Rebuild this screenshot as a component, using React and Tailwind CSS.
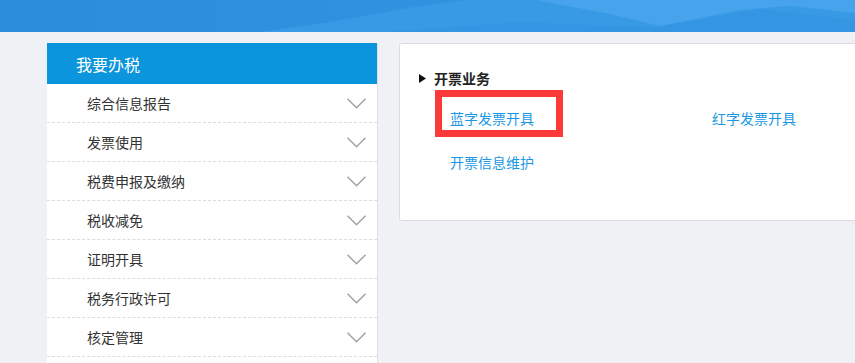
import React from 'react';

const menuItems = ['综合信息报告', '发票使用', '税费申报及缴纳', '税收减免', '证明开具', '税务行政许可', '核定管理'];

const Chevron = () => (
    <svg width="19" height="11" viewBox="0 0 19 11" className="shrink-0">
        <polyline points="0.5,0.8 9.5,9.8 18.5,0.8" fill="none" stroke="#a0a0a0" strokeWidth="1.4" />
    </svg>
);

const Banner = () => (
    <svg className="block h-[32px] w-full" viewBox="0 0 855 32" preserveAspectRatio="none">
        <defs>
            <linearGradient id="bannerBg" x1="0" y1="0" x2="1" y2="0">
                <stop offset="0" stopColor="#2b8cdc" />
                <stop offset="1" stopColor="#3597e3" />
            </linearGradient>
        </defs>
        <rect width="855" height="32" fill="url(#bannerBg)" />
        <polygon points="260,32 330,22 420,6 470,0 855,0 855,32" fill="#3899e5" />
        <polygon points="535,0 855,0 855,13 790,6 740,10 660,26 610,14" fill="#46a3ec" />
        <polygon points="380,32 520,22 610,26 660,27 760,9 855,20 855,32" fill="#3496e3" />
    </svg>
);

const App = () => {
    return (
        <div className="h-[363px] w-[855px] overflow-hidden bg-[#f0f1f5]" style={{ fontFamily: '"Noto Sans CJK SC", "Noto Sans", sans-serif' }}>
            <Banner />

            <div className="flex items-start pl-[47px] pt-[11px]">
                {/* Left menu */}
                <div className="w-[331px] shrink-0 border-r border-[#e0e0e0] bg-white">
                    <div className="flex h-[41px] items-center bg-[#0b95dc] pl-[29px] text-[16px] text-white">我要办税</div>
                    {menuItems.map((item) => (
                        <div key={item} className="flex h-[39px] items-center justify-between border-b border-dashed border-[#dcdcdc] pl-[40px] pr-[11px] text-[14px] text-[#333]">
                            <span>{item}</span>
                            <Chevron />
                        </div>
                    ))}
                    {/* next row, below the fold */}
                    <div className="h-[39px]" />
                </div>

                {/* Right content */}
                <div className="ml-[21px] h-[178px] w-[480px] shrink-0 rounded-[3px] border border-[#dcdcdc] bg-white pl-[19px] pt-[24px]">
                    <div className="flex h-[20px] items-center">
                        <svg width="8" height="9" viewBox="0 0 8 9">
                            <polygon points="0,0 7,4.5 0,9" fill="#111" />
                        </svg>
                        <span className="ml-[7px] text-[14px] font-bold text-[#222]">开票业务</span>
                    </div>

                    <div className="mt-[20px] grid grid-cols-[262px_200px] gap-y-[24px] pl-[31px] text-[14px] text-[#1a97e4]">
                        <div className="relative h-[20px] leading-[20px]">
                            蓝字发票开具
                            <div className="pointer-events-none absolute left-[-15px] top-[-18px] h-[47px] w-[128px] border-[7px] border-[#fd3a3a]" />
                        </div>
                        <div className="h-[20px] leading-[20px]">红字发票开具</div>
                        <div className="h-[20px] leading-[20px]">开票信息维护</div>
                    </div>
                </div>
            </div>
        </div>
    );
};

export default App;
